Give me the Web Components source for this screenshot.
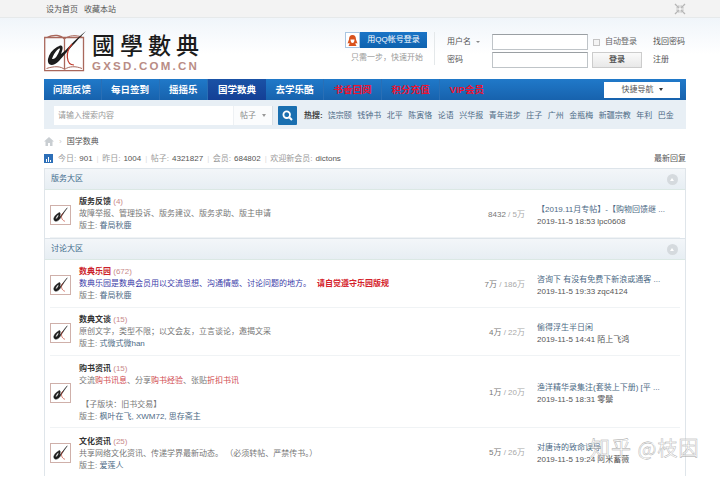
<!DOCTYPE html>
<html><head><meta charset="utf-8"><title>国学数典</title>
<style>
html,body{margin:0;padding:0;background:#fff}
body{font:8px/12px "Liberation Sans","Noto Sans CJK SC",sans-serif;color:#444;height:477px;overflow:hidden;position:relative}
x-forum i{font-style:normal;color:#d0484f}
x-forum span,x-forum div,x-forum b{line-height:12px}
</style></head><body>
<x-topbar></x-topbar>
<x-header></x-header>
<x-nav></x-nav>
<x-search></x-search>
<x-crumb></x-crumb>
<x-stats></x-stats>
<x-section name="版务大区">
  <x-forum title="版务反馈" count="4" stat="8432" stat2="5万" last="【2019.11月专帖】-【购物回馈继 ..." meta="2019-11-5 18:53 lpc0608" mods="眷局秋鹿" h="48">
    <span>故障举报、管理投诉、版务建议、版务求助、版主申请</span>
  </x-forum>
</x-section>
<x-section name="讨论大区">
  <x-forum title="数典乐园" hot count="672" stat="7万" stat2="186万" last="咨询下 有没有免费下新浪或通客 ..." meta="2019-11-5 19:33 zqc4124" mods="眷局秋鹿" h="48">
    <span style="color:#3b3aa8">数典乐园是数典会员用以交流思想、沟通情感、讨论问题的地方。</span><b style="color:#d4202a;margin-left:6px;font-weight:bold">请自觉遵守乐园版规</b>
  </x-forum>
  <x-forum title="数典文谈" count="15" stat="4万" stat2="22万" last="偷得浮生半日闲" meta="2019-11-5 14:41 陌上飞鸿" mods="式微式微han" h="48" dy="1">
    <span>原创文字，类型不限；以文会友，立言谈论，邀揭文采</span>
  </x-forum>
  <x-forum title="购书资讯" count="15" stat="1万" stat2="20万" last="渔洋精华录集注(套装上下册) [平 ..." meta="2019-11-5 18:31 零鬃" mods="枫叶在飞, XWM72, 思存斋主" h="72" dy="2">
    <span>交流<i>购书讯息</i>、分享<i>购书经验</i>、张贴<i>折扣书讯</i></span>
    <div style="height:12px"></div>
    <div>&nbsp;【子版块：旧书交易】</div>
  </x-forum>
  <x-forum title="文化资讯" count="25" stat="5万" stat2="26万" last="对唐诗的致命误导" meta="2019-11-5 19:24 阿米蓄薇" mods="爱莲人" h="48" dy="4" end>
    <span>共享网络文化资讯、传递学界最新动态。 （必须转帖、严禁传书。）</span>
  </x-forum>
</x-section>
<x-watermark>知乎 @枝因</x-watermark>
<script>
function def(tag,html){
  customElements.define(tag,class extends HTMLElement{
    constructor(){super();this.attachShadow({mode:'open'});}
    connectedCallback(){this.shadowRoot.innerHTML=typeof html==='function'?html(this):html;}
  });
}

def('x-topbar',`<style>:host{display:block;height:17px;background:#f3f3f3;border-bottom:1px solid #e6e9ea}
.w{display:flex;gap:6px;padding:3.5px 0 0 46px;color:#555;line-height:11px}
svg{position:absolute;left:674px;top:3px}</style>
<div class="w"><span>设为首页</span><span>收藏本站</span></div>
<svg width="12" height="12" viewBox="0 0 12 12" fill="none" stroke="#b5b5b5" stroke-width="1.3"><path d="M1 1 4.6 4.6M11 1 7.4 4.6M1 11 4.6 7.4M11 11 7.4 7.4"/><path d="M4.9 2.3V4.9H2.3M7.1 2.3V4.9H9.7M4.9 9.7V7.1H2.3M7.1 9.7V7.1H9.7" stroke-width="1"/></svg>`);

def('x-header',`<style>:host{display:block;height:61px;background:linear-gradient(#f0f5fa,#fff 60%);padding-left:44px;color:#555}
.r{display:flex;height:61px}
.logo{width:300px;display:flex;padding-top:12px;box-sizing:border-box}
.book{flex:none}
.t{margin:-1px 0 0 6px;display:flex;flex-direction:column}
.cn{font:500 23px/25px "Noto Sans CJK TC",serif;letter-spacing:5px;color:#1b1b1b;white-space:nowrap;margin-top:3px;width:112px}
.en{font:bold 11.5px/12px "Liberation Sans",sans-serif;letter-spacing:2.25px;color:#b98c85;white-space:nowrap;margin-top:3px}
.qq{margin-left:1px;width:89px;margin-top:14px;border-right:1px solid #e4e8ea;height:33px}
.qb{display:flex;width:82px;height:16px}
.ic{width:15px;height:16px;background:#fff;border:1px solid #a9c6e2;box-sizing:border-box;display:flex;align-items:center;justify-content:center}
.bl{flex:1;background:linear-gradient(#1a74c6,#0e62ae);color:#fff;text-align:center;line-height:16px}
.tip{color:#999;margin:4px 0 0 6px;white-space:nowrap}
.f{display:grid;grid-template-columns:45px 96px 65px auto;grid-auto-rows:18px;margin:15px 0 0 12px;align-items:center}
.in{height:16px;box-sizing:border-box;border:1px solid #bfc4c8;border-top-color:#9a9fa3;background:#fff}
.un{display:flex;align-items:center;gap:5px}
.ck{display:flex;align-items:center;gap:5px;padding-left:5px;color:#666}
.ck i{width:7px;height:7px;border:1px solid #c4c4c4;background:#f4f4f4;box-sizing:border-box}
.btn{margin-left:4px;width:50px;height:16px;box-sizing:border-box;border:1px solid #ccc;background:linear-gradient(#fafafa,#e8e8e8);text-align:center;line-height:14px;font-weight:bold;color:#555}
.car{border:2px solid transparent;border-top:2.5px solid #888;border-bottom:0;width:0;height:0}
.lk{color:#555;white-space:nowrap}
</style>
<div class="r">
 <div class="logo">
  <svg class="book" width="42" height="42" viewBox="0 0 42 42" fill="none"><path d="M.7 7.5H39.5V40.6H.7Z M2.5 7.5C10 4 17 5 20.5 9V39" stroke="#a9685c" stroke-width="1.3"/><path d="M20.5 9C25 5 32 5 38 7" stroke="#a9685c"/><path d="M2.5 38.5C10 36 17 36 20.5 39.5 25 36 32 36 38 38.5" stroke="#a9685c"/><path d="M4 29C3 36 9 37 15 31 19 27 24 20 42 1 29 11 23 20 17 24 20 17 19 13 13 17 8 20 5 24 4 29ZM8 29C10 23 15 17 16 19 15 22 12 30 8 29Z" fill="#1c1c1c"/><path d="M28 14C21 22 22 35 30 35" stroke="#c0392b" stroke-width="1.2"/></svg>
  <div class="t"><div class="cn">國學數典</div><div class="en">GXSD.COM.CN</div></div>
 </div>
 <div class="qq"><div class="qb"><span class="ic"><svg width="11" height="13" viewBox="0 0 11 13"><path d="M5.5 1C8 1 9 3 9 5.5L10.5 9.5 8.5 9C8.5 10.5 9 11 9.5 12H1.5C2 11 2.5 10.5 2.5 9L.5 9.5 2 5.5C2 3 3 1 5.5 1Z" fill="#d9531e"/><path d="M3.5 5.5H7.5C7.5 8 6.5 9 5.5 9S3.5 8 3.5 5.5Z" fill="#fff"/></svg></span><span class="bl">用QQ帐号登录</span></div><div class="tip">只需一步，快速开始</div></div>
 <div class="f">
  <div class="un">用户名<span class="car"></span></div><div class="in"></div><div class="ck"><i></i>自动登录</div><div class="lk">找回密码</div>
  <div>密码</div><div class="in"></div><div class="btn">登录</div><div class="lk">注册</div>
 </div>
</div>`);

def('x-nav',()=>{
 const it=[['问题反馈'],['每日签到'],['摇摇乐'],['国学数典','a'],['去学乐酷'],['书香回阅','h'],['积分充值','h'],['VIP会员','h']];
 return `<style>:host{display:block;margin-left:44px;width:642px;height:21px;background:linear-gradient(#2079c9,#1762ad)}
.w{display:flex;height:21px;align-items:stretch;justify-content:space-between;padding-right:6px;box-sizing:border-box}
ul{display:flex;margin:0;padding:0;list-style:none}
li{padding:0 9.5px;line-height:21px;color:#fff;font-size:9.5px;font-weight:bold;border-right:1px solid #2a6fb5;white-space:nowrap}
li:first-child{padding-left:9px}
li.a{background:linear-gradient(#1a52a6,#143f95);border-right:0;padding:0 10px}
li.h{color:#ee1230}
li:last-child{border-right:0}
.q{align-self:center;width:76px;height:16px;background:#fff;color:#555;display:flex;align-items:center;justify-content:center;gap:5px;font-size:8px}
.car{border:2.5px solid transparent;border-top:3px solid #333;border-bottom:0;width:0;height:0}
</style><div class="w"><ul>${it.map(([t,c])=>`<li class="${c||''}">${t}</li>`).join('')}</ul><div class="q">快捷导航<span class="car"></span></div></div>`;
});

def('x-search',()=>{
 const k='饶宗颐 钱钟书 北平 陈寅恪 论语 兴华报 青年进步 庄子 广州 金瓶梅 新疆宗教 年利 巴金'.split(' ');
 return `<style>:host{display:block;margin-left:44px;width:642px;height:29px;background:#e8eff5;box-sizing:border-box;padding:6px 0 0 10px}
.w{display:flex;align-items:center;height:19px}
.i{width:179px;height:19px;background:#fff;color:#999;line-height:19px;padding-left:4px;box-sizing:border-box}
.s{width:40px;height:19px;background:#fbfcfd;border-left:1px solid #eef1f4;box-sizing:border-box;color:#888;display:flex;align-items:center;gap:6px;padding-left:6px;border-right:1px solid #d9e0e6}
.car{border:2.5px solid transparent;border-top:3px solid #999;border-bottom:0;width:0;height:0}
.b{margin-left:5px;width:19px;height:19px;background:#1a6fb0;border-radius:1px;display:flex;align-items:center;justify-content:center}
.h{margin-left:7px;font-weight:bold;color:#444;white-space:nowrap}
.k{display:flex;gap:5.5px;margin-left:5px;color:#4d6a85;white-space:nowrap}
</style><div class="w"><div class="i">请输入搜索内容</div><div class="s">帖子<span class="car"></span></div>
<div class="b"><svg width="11" height="11" viewBox="0 0 11 11" fill="none" stroke="#fff" stroke-width="1.8"><circle cx="4.7" cy="4.7" r="3.3"/><path d="M7.2 7.2 10 10" stroke-width="2"/></svg></div>
<div class="h">热搜:</div><div class="k">${k.map(x=>`<span>${x}</span>`).join('')}</div></div>`;
});

def('x-crumb',`<style>:host{display:block;margin:6.5px 0 0 44px;height:12px;color:#555}
.w{display:flex;align-items:center;height:12px;gap:5px}
.g{color:#ccc}
</style><div class="w"><svg width="10" height="9" viewBox="0 0 10 9"><path d="M5 0 10 4.5H8.5V9H6V6H4V9H1.5V4.5H0Z" fill="#c9ced2"/></svg><span class="g">›</span><span>国学数典</span></div>`);

def('x-stats',`<style>:host{display:block;margin:4.5px 0 3px 44px;width:642px;height:13px;color:#999}
.w{display:flex;align-items:center;height:13px}
.ic{width:9px;height:9px;background:#2d6fb8;display:flex;align-items:flex-end;gap:1px;padding:1.5px;box-sizing:border-box;margin-right:5px}
.ic i{width:1.5px;background:#fff}
b{font-weight:normal;color:#555;margin-left:3px}
u{text-decoration:none;color:#ddd;margin:0 3.5px 0 4px}
.r{margin-left:auto;color:#555}
</style><div class="w"><span class="ic"><i style="height:3px"></i><i style="height:5px"></i><i style="height:2px"></i></span>
今日:<b>901</b><u>|</u>昨日:<b>1004</b><u>|</u>帖子:<b>4321827</b><u>|</u>会员:<b>684802</b><u>|</u>欢迎新会员:<b>dictons</b><span class="r">最新回复</span></div>`);

def('x-section',t=>`<style>:host{display:block;margin-left:44px;width:642px;box-sizing:border-box;border-left:1px solid #dfe5ea;border-right:1px solid #dfe5ea}
.h{height:22px;border-top:1px solid #dde4ea;border-bottom:1px solid #dbe8e4;box-sizing:border-box;background:linear-gradient(#f3f6f9,#e7eef3);display:flex;align-items:center;justify-content:space-between;padding:0 7px 0 6px;color:#3d6a8c}
.c{width:11px;height:11px;border-radius:50%;background:#d5dade;position:relative}
.c:after{content:"";position:absolute;left:3px;top:4px;border:2.5px solid transparent;border-bottom:3px solid #fff;border-top:0}
</style><div class="h"><span>${t.getAttribute('name')}</span><span class="c"></span></div><slot></slot>`);

def('x-forum',t=>{
 const a=n=>t.getAttribute(n)||'';
 return `<style>:host{display:block;margin:0 5px}
.w{display:flex;align-items:center;height:${a('h')}px;box-sizing:border-box;${t.hasAttribute('end')?'':'border-bottom:1px solid #f0f3f5;'}}
.ic{flex:none;width:21px;height:20px;border:1px solid #cfb0aa;box-sizing:border-box;margin:2px 8px 0 0;background:#fff;display:block}
.m{flex:1;min-width:0;color:#777;padding-top:${a('dy')||0}px}
.t{font-weight:bold;color:${t.hasAttribute('hot')?'#cc1f2b':'#333'}}
.t em{font-style:normal;font-weight:normal;color:#c98a8a}
.mod{color:#777}.mod b{font-weight:normal;color:#4d6a85}
.s{width:86px;text-align:right;color:#777;white-space:nowrap;flex:none;margin-right:12px;padding-top:2px}
.s i{font-style:normal;color:#aaa}
.l{width:143px;flex:none;color:#4d6a85;white-space:nowrap;padding-top:4px}
.l div+div{color:#555}
</style><div class="w"><svg class="ic" viewBox="0 0 21 20"><path d="M3 14C3 18 7 18 10 14 11 12.5 12.5 10 18 2 13 8 11 11 9.5 12.5 11 8 10 6 8 8 5 9.5 3.5 12 3 14ZM5 14C6 11 8 9 8.5 10 8 12 6.5 15 5 14Z" fill="#1c1c1c" stroke="#1c1c1c" stroke-width=".5"/><path d="M13 8C10.5 11 11.5 16 15.5 17" fill="none" stroke="#c0392b" stroke-width=".7"/></svg>
<div class="m"><div class="t">${a('title')} <em>(${a('count')})</em></div><slot></slot><div class="mod">版主: <b>${a('mods')}</b></div></div>
<div class="s">${a('stat')} <i>/ ${a('stat2')}</i></div>
<div class="l"><div>${a('last')}</div><div>${a('meta')}</div></div></div>`;
});

def('x-watermark',`<style>:host{position:absolute;left:590px;top:436px;font:400 20px/24px "Noto Sans CJK SC",sans-serif;color:rgba(255,255,255,.5);-webkit-text-stroke:.4px #a5a5a5;white-space:nowrap;letter-spacing:1px}</style><slot></slot>`);
</script>
</body></html>
